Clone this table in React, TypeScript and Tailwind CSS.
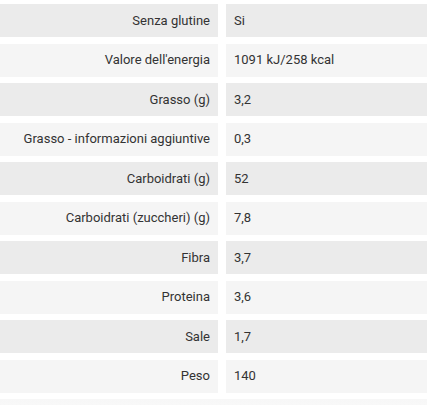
const rows: [string, string][] = [
  ["Senza glutine", "Si"],
  ["Valore dell'energia", "1091 kJ/258 kcal"],
  ["Grasso (g)", "3,2"],
  ["Grasso - informazioni aggiuntive", "0,3"],
  ["Carboidrati (g)", "52"],
  ["Carboidrati (zuccheri) (g)", "7,8"],
  ["Fibra", "3,7"],
  ["Proteina", "3,6"],
  ["Sale", "1,7"],
  ["Peso", "140"],
];

export default function App() {
  return (
    <div className="w-[427px] h-[405px] overflow-hidden bg-white pt-1 text-[13px] text-[#333333]" style={{ fontFamily: "Roboto, 'Liberation Sans', sans-serif" }}>
      <div className="grid grid-cols-[218px_1fr] gap-x-2 gap-y-[6.5px]">
        {rows.map(([label, value], i) => {
          const bg = i % 2 === 0 ? "bg-[#ebebeb]" : "bg-[#f5f5f5]";
          return (
            <div key={label} className="contents">
              <div className={`${bg} h-[33px] flex items-center justify-end pr-2`}>{label}</div>
              <div className={`${bg} h-[33px] flex items-center pl-2`}>{value}</div>
            </div>
          );
        })}
        <div className="col-span-2 h-[33px] bg-gradient-to-b from-[#f7f7f7] to-[#fcfcfc]" />
      </div>
    </div>
  );
}
